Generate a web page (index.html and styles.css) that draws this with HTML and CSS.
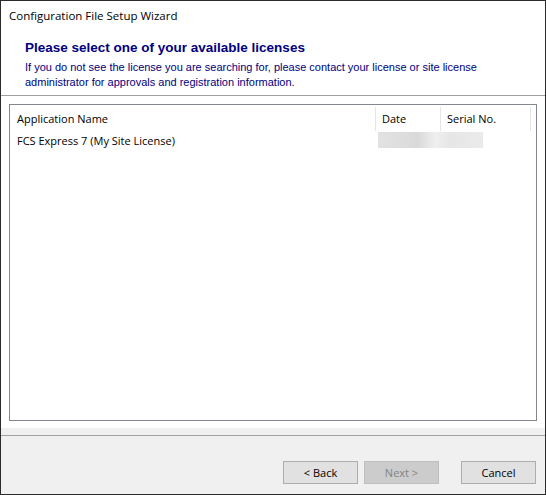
FILE: index.html
```html
<!DOCTYPE html>
<html>
<head>
<meta charset="utf-8">
<link rel="stylesheet" href="styles.css">
</head>
<body>
<div class="window">
  <div class="titlebar">Configuration File Setup Wizard</div>
  <div class="header">
    <div class="heading">Please select one of your available licenses</div>
    <div class="desc">If you do not see the license you are searching for, please contact your license or site license<br>administrator for approvals and registration information.</div>
  </div>
  <div class="sep"></div>
  <div class="content">
    <div class="listbox">
      <div class="list-head">
        <div class="col col-name">Application Name</div>
        <div class="col col-date">Date</div>
        <div class="col col-serial">Serial No.</div>
      </div>
      <div class="list-row">
        <div class="cell-name">FCS Express 7 (My Site License)</div>
        <div class="redacted"></div>
      </div>
    </div>
  </div>
  <div class="band"></div>
  <div class="sep"></div>
  <div class="footer">
    <button class="btn">&lt; Back</button>
    <button class="btn btn-disabled" disabled>Next &gt;</button>
    <button class="btn btn-cancel">Cancel</button>
  </div>
</div>
</body>
</html>
```

FILE: styles.css
```css
html, body {
  margin: 0;
  padding: 0;
}
body {
  background: #2b2b2b;
  width: 546px;
  height: 495px;
  overflow: hidden;
}
.window {
  margin: 1px 0 0 1px;
  width: 544px;
  height: 493px;
  display: flex;
  flex-direction: column;
  background: #f0f0f0;
  font-family: "Open Sans", "Liberation Sans", sans-serif;
  font-size: 11px;
  color: #000;
}
.titlebar {
  height: 30px;
  line-height: 30px;
  padding-left: 8px;
  background: #fff;
  box-sizing: border-box;
  font-size: 11.5px;
}
.header {
  height: 64px;
  box-sizing: border-box;
  padding: 8px 0 0 24px;
  background: #fff;
  font-family: "Liberation Sans", Arial, sans-serif;
  color: #000080;
}
.heading {
  font-weight: bold;
  font-size: 13.5px;
  line-height: 17px;
}
.desc {
  margin-top: 4px;
  font-size: 11px;
  line-height: 15px;
}
.sep {
  height: 1px;
  background: #a0a0a0;
}
.content {
  height: 332px;
  box-sizing: border-box;
  padding: 8px 8px 7px 8px;
  background: #fff;
}
.listbox {
  height: 317px;
  box-sizing: border-box;
  border: 1px solid #828790;
  background: #fff;
}
.list-head {
  display: flex;
  padding-top: 2px;
}
.col {
  height: 24px;
  line-height: 24px;
  box-sizing: border-box;
  border-right: 1px solid #e5e5e5;
  white-space: nowrap;
}
.col-name {
  width: 366px;
  padding-left: 7px;
}
.col-date {
  width: 65px;
  padding-left: 6px;
}
.col-serial {
  width: 90px;
  padding-left: 6px;
}
.list-row {
  display: flex;
  height: 18px;
  margin-top: 1px;
  align-items: flex-start;
}
.cell-name {
  width: 366px;
  padding-left: 7px;
  box-sizing: border-box;
  line-height: 18px;
  white-space: nowrap;
}
.redacted {
  margin-left: 2px;
  width: 105px;
  height: 16px;
  background: linear-gradient(90deg, #e2e2e2 0%, #dedede 20%, #d9d9d9 38%, #efefef 55%, #e6e6e6 68%, #ebebeb 100%);
}
.band {
  height: 7px;
  background: #f0f0f0;
}
.footer {
  flex: 1;
  display: flex;
  justify-content: flex-end;
  align-items: flex-start;
  padding: 25px 9px 0 0;
  background: #f0f0f0;
}
.btn {
  width: 75px;
  height: 23px;
  margin: 0;
  padding: 0;
  box-sizing: border-box;
  border: 1px solid #adadad;
  background: #e1e1e1;
  color: #000;
  font-family: "Open Sans", "Liberation Sans", sans-serif;
  font-size: 11px;
  line-height: 21px;
}
.btn + .btn {
  margin-left: 6px;
}
.btn-disabled {
  background: #cccccc;
  border-color: #bfbfbf;
  color: #838383;
}
.btn-cancel {
  margin-left: 22px !important;
}
```
